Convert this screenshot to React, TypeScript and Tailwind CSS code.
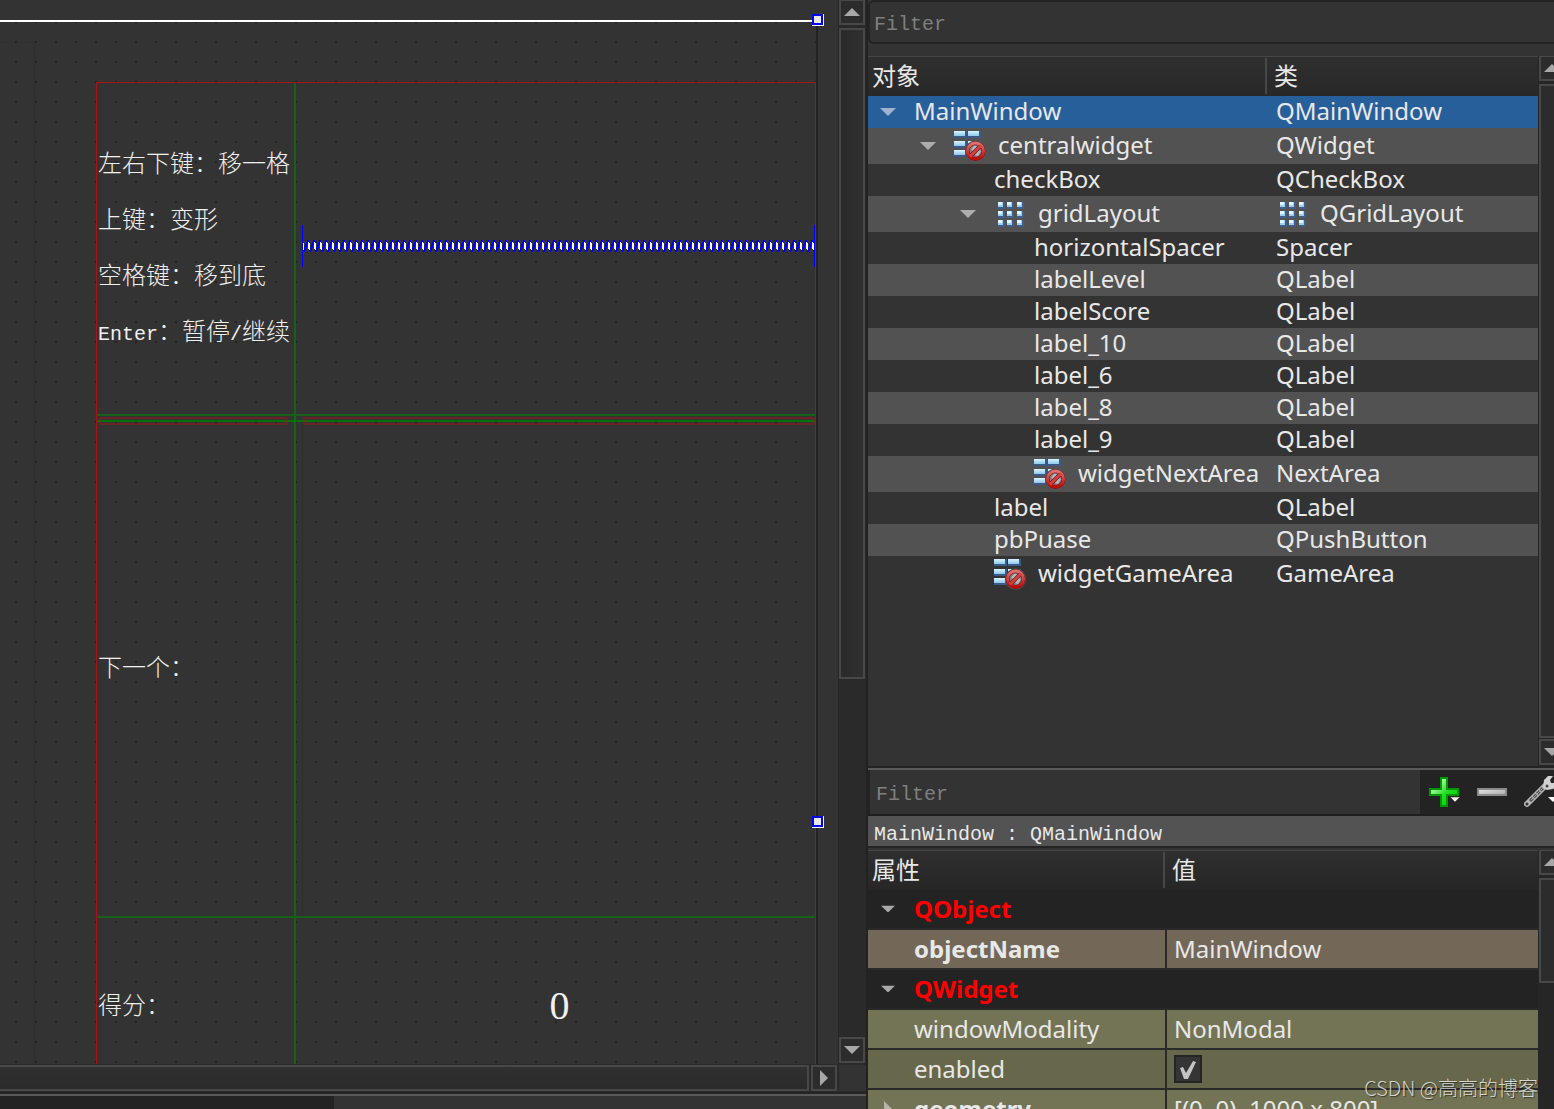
import { useState } from 'react';
import { clsx } from 'clsx';

type IconKind = 'broken' | 'grid';

interface TreeItem {
  name: string;
  cls: string;
  level: number;
  open?: boolean;
  icon?: IconKind;
  clsIcon?: IconKind;
}

const treeItems: TreeItem[] = [
  { name: 'MainWindow', cls: 'QMainWindow', level: 0, open: true },
  { name: 'centralwidget', cls: 'QWidget', level: 1, open: true, icon: 'broken' },
  { name: 'checkBox', cls: 'QCheckBox', level: 2 },
  { name: 'gridLayout', cls: 'QGridLayout', level: 2, open: true, icon: 'grid', clsIcon: 'grid' },
  { name: 'horizontalSpacer', cls: 'Spacer', level: 3 },
  { name: 'labelLevel', cls: 'QLabel', level: 3 },
  { name: 'labelScore', cls: 'QLabel', level: 3 },
  { name: 'label_10', cls: 'QLabel', level: 3 },
  { name: 'label_6', cls: 'QLabel', level: 3 },
  { name: 'label_8', cls: 'QLabel', level: 3 },
  { name: 'label_9', cls: 'QLabel', level: 3 },
  { name: 'widgetNextArea', cls: 'NextArea', level: 3, icon: 'broken' },
  { name: 'label', cls: 'QLabel', level: 2 },
  { name: 'pbPuase', cls: 'QPushButton', level: 2 },
  { name: 'widgetGameArea', cls: 'GameArea', level: 2, icon: 'broken' },
];

const indents = ['pl-3', 'pl-[52px]', 'pl-[92px]', 'pl-[132px]'];

const uiFont = "font-['Noto_Sans','Noto_Sans_CJK_SC',sans-serif]";
const monoFont = "font-['Liberation_Mono','Noto_Sans_CJK_SC',monospace]";

const Arrow = ({ dir, className }: { dir: 'up' | 'down' | 'right'; className?: string }) => {
  const points = {
    up: '0,8 8,0 16,8',
    down: '0,0 16,0 8,8',
    right: '0,0 8,8 0,16',
  }[dir];
  const size = dir === 'right' ? 'w-2 h-4' : 'w-4 h-2';
  return (
    <svg viewBox={dir === 'right' ? '0 0 8 16' : '0 0 16 8'} className={clsx('block shrink-0', size, className)}>
      <polygon points={points} fill="currentColor" />
    </svg>
  );
};

const BrokenLayoutIcon = () => (
  <svg viewBox="0 0 32 32" className="block w-8 h-8 shrink-0">
    <defs>
      <linearGradient id="bar" x1="0" y1="0" x2="0" y2="1">
        <stop offset="0" stopColor="#d9f3ff" />
        <stop offset="1" stopColor="#8cc8ee" />
      </linearGradient>
      <linearGradient id="stop" x1="0" y1="0" x2="0" y2="1">
        <stop offset="0" stopColor="#dd7474" />
        <stop offset="1" stopColor="#c00808" />
      </linearGradient>
    </defs>
    {[1, 11, 20].map((y) => (
      <g key={y}>
        <rect x="0" y={y} width="13" height="7" fill="#3d5a85" />
        <rect x="14" y={y} width="13" height="7" fill="#3d5a85" />
        <rect x="0" y={y} width="11" height="5" fill="url(#bar)" />
        <rect x="14" y={y} width="11" height="5" fill="url(#bar)" />
      </g>
    ))}
    <circle cx="21.500" cy="21" r="10.500" fill="#5a5a5a" />
    <circle cx="21.500" cy="21" r="8" fill="#7c7c7c" stroke="#7a1515" strokeWidth="4" />
    <path d="M17 20l3-4h3l-3 5zM21 25l4-5 2 1-3 5z" fill="#b9b9b9" />
    <path d="M15.500 27l12-12" stroke="#7a1515" strokeWidth="4" />
    <circle cx="21.500" cy="21" r="8" fill="none" stroke="url(#stop)" strokeWidth="3" />
    <path d="M16 26.500l11-11" stroke="#cf4040" strokeWidth="3" />
  </svg>
);

const GridLayoutIcon = () => (
  <svg viewBox="0 0 32 32" className="block w-8 h-8 shrink-0">
    {[4, 13, 22].map((y) =>
      [4, 13, 23].map((x) => (
        <g key={`${x}-${y}`}>
          <rect x={x} y={y} width="7" height="7" fill="#3f5f8a" />
          <rect x={x} y={y} width="5" height="5" fill="#9ccfee" />
          <rect x={x} y={y} width="4" height="3" fill="#dff5ff" />
        </g>
      ))
    )}
  </svg>
);

const LayoutIcon = ({ kind }: { kind: IconKind }) => (kind === 'grid' ? <GridLayoutIcon /> : <BrokenLayoutIcon />);

const ScrollButton = ({ dir, label }: { dir: 'up' | 'down' | 'right'; label: string }) => (
  <button
    aria-label={label}
    className="flex items-center justify-center w-[26px] h-[26px] shrink-0 border-2 border-[#484848] bg-[#2c2c2c] text-[#a8a8a8]"
  >
    <Arrow dir={dir} />
  </button>
);

const SizeHandle = ({ className }: { className: string }) => (
  <div className={clsx('absolute -right-2 w-3 h-3 border-r border-b border-white', className)}>
    <div className="w-full h-full border-2 border-[#0000ff] bg-[#e8e8e8]" />
  </div>
);

const Spacer = () => (
  <div className="flex items-center w-full h-[42px] border-x border-[#0000ff]">
    <svg className="block w-full h-3" aria-hidden="true" shapeRendering="crispEdges">
      <defs>
        <pattern id="coil" x="5" width="6" height="12" patternUnits="userSpaceOnUse">
          <path d="M0 2h1v7h-1zM1 3h1v7h-1z" fill="#fff" />
          <path d="M0 0h1v2h-1zM1 10h1v2h-1zM2 7h1v5h-1zM3 4h1v7h-1zM4 2h1v6h-1zM5 0h1v5h-1z" fill="#00f" />
        </pattern>
      </defs>
      <rect width="100%" height="12" fill="url(#coil)" />
    </svg>
  </div>
);

const LayoutOutline = ({ className }: { className: string }) => (
  <div className={clsx('absolute top-px h-2 rounded-xs border-2 border-[#a01818]/50', className)} />
);

const labelText = clsx(monoFont, 'pl-px text-[24px] leading-6 font-light text-[#f0f0f0] whitespace-nowrap');

const FormCanvas = () => (
  <div className="flex-1 min-w-0 overflow-hidden pt-5 pr-5">
    <div className="relative h-[1604px] border-t-2 border-t-white border-r-2 border-r-[#232323] bg-[#333333] bg-[conic-gradient(from_270deg_at_2px_2px,#222222_90deg,transparent_0)] bg-[length:20px_20px] bg-[position:15px_19px]">
      <SizeHandle className="-top-2" />
      <SizeHandle className="top-[794px]" />
      <div className="flex pt-5">
        <div className="w-[35px] shrink-0 h-[1500px] border-t border-r border-dotted border-[#2a2a2a]" />
        <div className="flex-1 min-w-0 pl-[61px] pt-10">
          <div className="grid grid-cols-[199px_1fr] grid-rows-[333px_6px_496px_174px] border border-[#a81414]">
            <div className="flex flex-col justify-center gap-8 pt-1 border-r-2 border-b-2 border-[#186018]">
              <p className={labelText}>左右下键：移一格</p>
              <p className={labelText}>上键：变形</p>
              <p className={labelText}>空格键：移到底</p>
              <p className={labelText}>
                <span className="text-[20px]">Enter</span>：暂停<span className="text-[20px]">/</span>继续
              </p>
            </div>
            <div className="flex items-center pl-[6px] pb-[6px] border-b-2 border-[#186018]">
              <Spacer />
            </div>

            <div className="relative border-r-2 border-b-2 border-[#087008]">
              <LayoutOutline className="left-[2px] right-[6px]" />
            </div>
            <div className="relative border-b-2 border-[#087008]">
              <LayoutOutline className="left-[7px] right-0" />
            </div>

            <div className="flex items-center pt-[2px] border-r-2 border-b-2 border-[#186018]">
              <p className={labelText}>下一个：</p>
            </div>
            <div className="pl-[6px] border-b-2 border-[#186018]">
              <div className="h-full border-l border-dotted border-[#2a2a2a]" />
            </div>

            <div className="flex items-center pt-[6px] border-r-2 border-[#186018]">
              <p className={labelText}>得分：</p>
            </div>
            <div className="flex items-center justify-center pl-2 pt-px">
              <span className="font-['Liberation_Serif',serif] text-[40px] leading-10 text-[#f0f0f0]">0</span>
            </div>
          </div>
        </div>
      </div>
    </div>
  </div>
);

const FormEditor = () => (
  <section className="flex flex-col min-w-0 overflow-hidden border-r-2 border-[#222222]">
    <div className="flex flex-1 min-h-0">
      <FormCanvas />
      <div className="flex flex-col w-7 shrink-0 pr-px pb-px border-l border-[#262626] bg-[#2a2a2a]">
        <div className="-mt-px">
          <ScrollButton dir="up" label="Scroll up" />
        </div>
        <div className="flex flex-col flex-1 min-h-0 pt-[3px]">
          <div className="h-[651px] border-2 border-[#484848] bg-linear-to-r from-[#2a2a2a] to-[#303030]" />
        </div>
        <ScrollButton dir="down" label="Scroll down" />
      </div>
    </div>
    <div className="flex h-[30px] shrink-0 pt-px pb-px gap-[2px] border-b-2 border-[#242424] bg-[#2a2a2a]">
      <div className="flex-1 border-2 border-l-0 border-[#484848] bg-linear-to-b from-[#303030] to-[#2a2a2a]" />
      <ScrollButton dir="right" label="Scroll right" />
      <div className="w-[27px] bg-[#333333]" />
    </div>
    <div className="flex h-[15px] shrink-0 border-t-2 border-[#5a5a5a]">
      <div className="w-[334px] bg-[#232323]" />
      <div className="flex-1 bg-[#333333]" />
    </div>
  </section>
);

const SideScrollbar = ({ thumb, withDown }: { thumb: string; withDown?: boolean }) => (
  <div className="flex flex-col w-4 shrink-0 overflow-hidden pl-px bg-[#262626]">
    <div className="-mt-px">
      <ScrollButton dir="up" label="Scroll up" />
    </div>
    <div className="flex-1 min-h-0 pt-[3px]">
      <div className={clsx('w-[26px] border-2 border-[#484848] bg-[#2c2c2c]', thumb)} />
    </div>
    {withDown && (
      <div className="pb-px">
        <ScrollButton dir="down" label="Scroll down" />
      </div>
    )}
  </div>
);

const headCell = 'p-0 text-left text-[24px] leading-9 font-normal border-t border-t-[#454545]';

const ObjectInspector = () => {
  const [selected, setSelected] = useState(0);
  const [filter, setFilter] = useState('');

  return (
    <div className="flex flex-col h-[768px] shrink-0 border-b-2 border-[#242424]">
      <input
        aria-label="Filter objects"
        placeholder="Filter"
        value={filter}
        onChange={(e) => setFilter(e.target.value)}
        className={clsx(monoFont, 'h-11 shrink-0 w-full rounded-l-md border-2 border-r-0 border-[#242424] bg-[#333333] pl-1 pt-1 text-[20px] text-[#e8e8e8] placeholder:text-[#7f7f7f] outline-none')}
      />
      <div className="flex flex-1 min-h-0 mt-3">
        <div className="flex-1 min-w-0">
          <table className="w-full table-fixed border-separate border-spacing-0">
            <thead>
              <tr className="h-10 bg-linear-to-b from-[#2f2f2f] to-[#282828]">
                <th className={clsx(headCell, 'w-[400px] pl-1 pb-[2px]')}>
                  <div className="mr-px border-r-2 border-[#484848]">对象</div>
                </th>
                <th className={clsx(headCell, 'pl-[6px] pb-[2px]')}>类</th>
              </tr>
            </thead>
            <tbody>
              {treeItems.map((item, i) => (
                <tr
                  key={item.name}
                  onClick={() => setSelected(i)}
                  className={clsx(
                    item.icon ? 'h-9' : 'h-8',
                    'leading-[30px]',
                    i === selected ? 'bg-[#275f9b]' : i % 2 === 1 ? 'bg-[#525252]' : 'bg-[#333333]'
                  )}
                >
                  <td className="p-0">
                    <div className={clsx('flex items-center whitespace-nowrap', indents[item.level])}>
                      <div className="w-[34px] shrink-0">
                        {item.open && (
                          <button aria-label={`Collapse ${item.name}`} className={clsx('block', i === selected ? 'text-[#9db4cf]' : 'text-[#adadad]')}>
                            <Arrow dir="down" />
                          </button>
                        )}
                      </div>
                      {item.icon && (
                        <div className="w-11 shrink-0">
                          <LayoutIcon kind={item.icon} />
                        </div>
                      )}
                      <span className="pb-[2px]">{item.name}</span>
                    </div>
                  </td>
                  <td className="p-0 pl-2">
                    <div className="flex items-center">
                      {item.clsIcon && (
                        <div className="w-11 shrink-0">
                          <LayoutIcon kind={item.clsIcon} />
                        </div>
                      )}
                      <span className="pb-[2px]">{item.cls}</span>
                    </div>
                  </td>
                </tr>
              ))}
            </tbody>
          </table>
        </div>
        <SideScrollbar thumb="h-[654px]" withDown />
      </div>
    </div>
  );
};

const PlusIcon = () => (
  <svg viewBox="0 0 32 32" className="block w-8 h-8">
    <defs>
      <linearGradient id="plus" x1="0" y1="0" x2="1" y2="1">
        <stop offset="0.200" stopColor="#b8ffb0" />
        <stop offset="0.550" stopColor="#22dd22" />
        <stop offset="1" stopColor="#00c400" />
      </linearGradient>
    </defs>
    <path d="M13 2h6v11h11v6h-11v11h-6v-11h-11v-6h11z" fill="url(#plus)" stroke="#009a00" strokeWidth="2" />
    <path d="M22 21h10l-5 5z" fill="#f4f4f4" stroke="#333" strokeWidth="0.500" />
  </svg>
);

const MinusIcon = () => (
  <svg viewBox="0 0 32 32" className="block w-8 h-8">
    <defs>
      <linearGradient id="minus" x1="0" y1="0" x2="1" y2="1">
        <stop offset="0" stopColor="#e6e6e6" />
        <stop offset="1" stopColor="#a9a9a9" />
      </linearGradient>
    </defs>
    <rect x="2" y="13" width="28" height="6" fill="url(#minus)" stroke="#8b8b8b" strokeWidth="2" />
  </svg>
);

const WrenchIcon = () => (
  <svg viewBox="0 0 32 32" className="block w-8 h-8">
    <path d="M3 28L21 10" stroke="#b4b4b4" strokeWidth="6" strokeLinecap="round" />
    <path d="M6 25L19 12" stroke="#555" strokeWidth="3" strokeDasharray="4 1" />
    <path d="M7 24L19 12" stroke="#a0a0a0" strokeWidth="1" />
    <circle cx="3" cy="28" r="1.500" fill="#333" />
    <path d="M19 12l1-8 4-4h5l-3 4 1 3h4l1 3-3 3-6 1z" fill="#d2d2d2" />
    <circle cx="23" cy="10" r="1.500" fill="#444" />
    <path d="M24 21h10l-5 5z" fill="#f4f4f4" />
  </svg>
);

const nameCell = 'p-0 pl-[46px] border-r-2 border-b-2 border-[#2a2a2a]';
const valueCell = 'p-0 pl-[7px] border-b-2 border-[#2a2a2a]';

const CategoryRow = ({ name }: { name: string }) => (
  <tr className="h-10 bg-[#232323]">
    <th colSpan={2} className="p-0 pl-3 text-left font-bold text-[#ff0000] border-b-2 border-[#292929]">
      <div className="flex items-center">
        <button aria-label={`Collapse ${name}`} className="w-[34px] text-[#a8a8a8]">
          <Arrow dir="down" className="scale-90" />
        </button>
        {name}
      </div>
    </th>
  </tr>
);

const PropertyEditor = () => {
  const [filter, setFilter] = useState('');
  const [enabled, setEnabled] = useState(true);

  return (
    <div className="flex flex-col flex-1 min-h-0 overflow-hidden border-t-2 border-[#5a5a5a]">
      <div className="flex h-[46px] shrink-0 border-b-2 border-[#1e1e1e] bg-[#232323]">
        <input
          aria-label="Filter properties"
          placeholder="Filter"
          value={filter}
          onChange={(e) => setFilter(e.target.value)}
          className={clsx(monoFont, 'flex-1 min-w-0 ml-[2px] pl-[6px] pt-[6px] bg-[#333333] text-[20px] text-[#e8e8e8] placeholder:text-[#7f7f7f] outline-none')}
        />
        <div className="flex gap-4 w-[134px] shrink-0 pl-2 pt-[6px] overflow-hidden">
          <button aria-label="Add property" className="w-8 h-8 shrink-0"><PlusIcon /></button>
          <button aria-label="Remove property" className="w-8 h-8 shrink-0"><MinusIcon /></button>
          <button aria-label="Configure" className="w-8 h-8 shrink-0"><WrenchIcon /></button>
        </div>
      </div>
      <div className={clsx(monoFont, 'h-8 shrink-0 pt-[5px] pl-[6px] border-b-2 border-[#242424] bg-[#535353] text-[20px] leading-7 whitespace-pre')}>
        MainWindow : QMainWindow
      </div>
      <div className="flex flex-1 min-h-0 mt-[2px] overflow-hidden">
        <div className="flex-1 min-w-0">
          <table className="w-full table-fixed border-separate border-spacing-0">
            <thead>
              <tr className="h-10 bg-linear-to-b from-[#2f2f2f] to-[#262626]">
                <th className={clsx(headCell, 'w-[299px] pl-1 pb-[2px]')}>
                  <div className="mr-[2px] border-r-2 border-[#484848]">属性</div>
                </th>
                <th className={clsx(headCell, 'pl-[5px] pb-[2px]')}>值</th>
              </tr>
            </thead>
            <tbody>
              <CategoryRow name="QObject" />
              <tr className="h-10 bg-[#736858]">
                <td className={clsx(nameCell, 'font-bold')}>objectName</td>
                <td className={valueCell}>MainWindow</td>
              </tr>
              <CategoryRow name="QWidget" />
              <tr className="h-10 bg-[#737455]">
                <td className={nameCell}>windowModality</td>
                <td className={valueCell}>NonModal</td>
              </tr>
              <tr className="h-10 bg-[#66674b]">
                <td className={nameCell}>
                  <label htmlFor="enabled">enabled</label>
                </td>
                <td className={valueCell}>
                  <div className="grid w-7 h-7">
                    <input
                      id="enabled"
                      type="checkbox"
                      checked={enabled}
                      onChange={(e) => setEnabled(e.target.checked)}
                      className="col-start-1 row-start-1 appearance-none w-7 h-7 border-2 border-[#242424] bg-[#353535]"
                    />
                    {enabled && (
                      <svg viewBox="0 0 28 28" className="col-start-1 row-start-1 w-7 h-7 pointer-events-none">
                        <path d="M6 13l3-1 3 6 7-12 3 1-8 17h-4z" fill="#c4c4c4" />
                      </svg>
                    )}
                  </div>
                </td>
              </tr>
              <tr className="h-10 bg-[#737455]">
                <td className="p-0 pl-4 border-r-2 border-b-2 border-[#2a2a2a] font-bold">
                  <div className="flex items-center">
                    <button aria-label="Expand geometry" className="w-[30px] text-[#b4b4a8]">
                      <Arrow dir="right" />
                    </button>
                    geometry
                  </div>
                </td>
                <td className={valueCell}>[(0, 0), 1000 x 800]</td>
              </tr>
            </tbody>
          </table>
        </div>
        <SideScrollbar thumb="h-[105px]" />
      </div>
    </div>
  );
};

const App = () => (
  <main className={clsx(uiFont, 'relative grid grid-cols-[868fr_686fr] h-screen overflow-hidden bg-[#333333] text-[24px] leading-8 text-[#e8e8e8]')}>
    <FormEditor />
    <section className="flex flex-col min-w-0 overflow-hidden">
      <ObjectInspector />
      <PropertyEditor />
    </section>
    <div className="absolute right-4 bottom-[5px] text-[20px] leading-8 font-light text-white/75 font-['Noto_Sans_CJK_SC',sans-serif] [text-shadow:1px_1px_1px_#0008]">
      CSDN @高高的博客
    </div>
  </main>
);

export default App;
